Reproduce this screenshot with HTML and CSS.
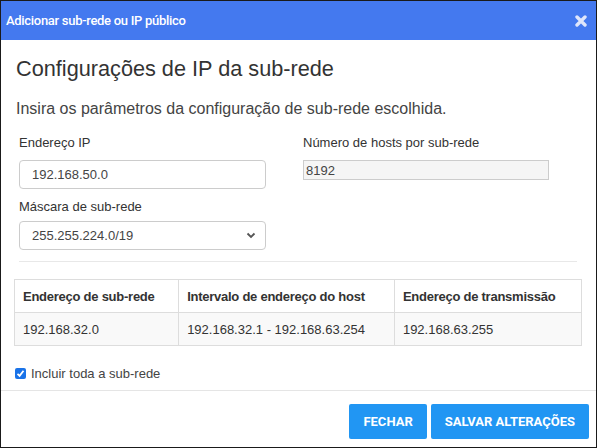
FILE: index.html
```html
<!DOCTYPE html>
<html lang="pt">
<head>
<meta charset="utf-8">
<link rel="stylesheet" href="styles.css">
</head>
<body>
<div class="dialog">
  <div class="header">
    <span class="title">Adicionar sub-rede ou IP público</span>
    <svg class="close" width="12" height="12" viewBox="0 0 12 12"><path d="M2 2 L10 10 M10 2 L2 10" stroke="#dfe6fb" stroke-width="3.4" stroke-linecap="round"/></svg>
  </div>
  <div class="content">
    <h2 class="heading">Configurações de IP da sub-rede</h2>
    <p class="intro">Insira os parâmetros da configuração de sub-rede escolhida.</p>
    <div class="form">
      <div class="col">
        <label class="label">Endereço IP</label>
        <div class="input">192.168.50.0</div>
        <label class="label label2">Máscara de sub-rede</label>
        <div class="input select">
          <span>255.255.224.0/19</span>
          <svg width="10" height="7" viewBox="0 0 10 7"><path d="M1.5 1.5 L5 5 L8.5 1.5" fill="none" stroke="#555" stroke-width="1.8"/></svg>
        </div>
      </div>
      <div class="col col-right">
        <label class="label">Número de hosts por sub-rede</label>
        <div class="readonly">8192</div>
      </div>
    </div>
    <hr class="sep">
    <table class="table">
      <thead>
        <tr><th class="c1">Endereço de sub-rede</th><th class="c2">Intervalo de endereço do host</th><th class="c3">Endereço de transmissão</th></tr>
      </thead>
      <tbody>
        <tr><td>192.168.32.0</td><td>192.168.32.1 - 192.168.63.254</td><td>192.168.63.255</td></tr>
      </tbody>
    </table>
    <label class="check">
      <span class="box"><svg width="9" height="9" viewBox="0 0 9 9"><path d="M1.5 4.8 L3.6 6.8 L7.5 1.8" fill="none" stroke="#fff" stroke-width="1.8"/></svg></span>
      <span>Incluir toda a sub-rede</span>
    </label>
  </div>
  <div class="footer">
    <button class="btn">FECHAR</button>
    <button class="btn">SALVAR ALTERAÇÕES</button>
  </div>
</div>
</body>
</html>
```
FILE: styles.css
```css
html, body { margin: 0; padding: 0; background: #fff; }
.dialog {
  width: 597px; height: 448px; box-sizing: border-box;
  border: 1px solid #1a1a1a;
  font-family: "Liberation Sans", Arial, sans-serif;
  color: #333;
  display: flex; flex-direction: column;
}
.header {
  height: 39px; background: #4479ef;
  display: flex; align-items: center; justify-content: space-between;
  padding: 0 9px 0 5px;
}
.title { color: #fff; font-family: Roboto, "Liberation Sans", sans-serif; font-size: 13px; font-weight: 500; letter-spacing: -0.3px; }
.close { display: block; }
.content { padding: 0 14px 0 14px; flex: 1; }
.heading { font-size: 21.7px; font-weight: 400; margin: 16px 0 0 1px; line-height: 26px; color: #333; }
.intro { font-size: 16px; margin: 17px 0 0 1px; line-height: 20px; color: #444; }
.form { display: flex; margin-top: 16px; padding-left: 4px; }
.col { width: 247px; display: flex; flex-direction: column; }
.col-right { margin-left: 37px; }
.label { font-size: 13px; line-height: 16px; color: #333; }
.label2 { margin-top: 10px; }
.input {
  margin-top: 9px; height: 29px; box-sizing: border-box;
  border: 1px solid #ccc; border-radius: 4px;
  font-size: 13px; padding: 0 12px; display: flex; align-items: center; color: #444;
}
.select { justify-content: space-between; padding-right: 9px; margin-top: 6px; }
.readonly {
  margin-top: 9px; height: 20px; box-sizing: border-box; width: 246px;
  border: 1px solid #ccc; background: #f5f5f5;
  font-size: 13px; padding: 0 2px; display: flex; align-items: center; color: #444;
}
.sep { border: 0; border-top: 1px solid #e8e8e8; margin: 11px 5px 0 4px; }
.table {
  margin-top: 17px; width: 568px; border-collapse: collapse; font-size: 13px; margin-left: -1px;
}
.table th, .table td { border: 1px solid #ddd; text-align: left; padding: 0 8px; height: 32px; color: #333; }
.table th { font-weight: 700; color: #333; letter-spacing: -0.25px; }
.table tbody td { background: #f9f9f9; }
.c1 { width: 126px; }
.c2 { width: 171px; }
.c3 { width: 146px; }
.check { display: flex; align-items: center; margin-top: 20px; font-size: 13px; color: #444; }
.box {
  width: 11px; height: 11px; background: #1a73e8; border-radius: 2px; margin-right: 5px;
  display: flex; align-items: center; justify-content: center;
}
.box svg { display: block; }
.footer {
  border-top: 1px solid #e5e5e5; height: 57px; box-sizing: border-box;
  display: flex; justify-content: flex-end; align-items: flex-start; padding: 13px 7px 0 0; gap: 4px;
}
.btn {
  background: #2196f3; color: #fff; border: 0; border-radius: 2px;
  font-family: Roboto, "Liberation Sans", Arial, sans-serif; font-weight: 700; font-size: 13px;
  height: 35px; padding: 0 14px;
}
```
